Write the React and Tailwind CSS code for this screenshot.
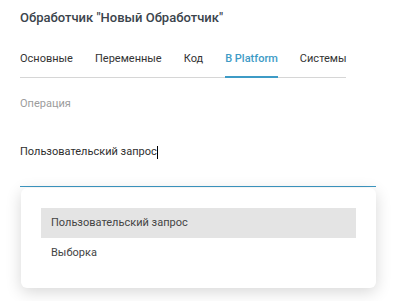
import React from "react";

export default function App() {
  const tabs = ["Основные", "Переменные", "Код", "B Platform", "Системы"];
  return (
    <div
      className="relative w-[398px] h-[301px] bg-white overflow-hidden"
      style={{ fontFamily: "Roboto, 'Noto Sans', sans-serif" }}
    >
      <div className="px-5 pt-[9px]">
        <div className="text-[13px] leading-[18px] font-medium text-[#3b444c] whitespace-nowrap">
          Обработчик "Новый Обработчик"
        </div>
        <div className="mt-[24px] w-[326px] flex gap-[22px] border-b border-[#d6d6d6]">
          {tabs.map((t) => (
            <div
              key={t}
              className={
                t === "B Platform"
                  ? "-mb-px pb-[9px] whitespace-nowrap text-[11px] leading-4 font-medium text-[#3d9bc6] border-b-2 border-[#3d9bc6]"
                  : "pb-[10px] whitespace-nowrap text-[11px] leading-4 text-[#333333]"
              }
            >
              {t}
            </div>
          ))}
        </div>
        <div className="mt-[19px] text-[11px] leading-[14px] text-[#9c9c9c]">
          Операция
        </div>
        <div className="mt-[33px] w-[356px] pb-[26px] border-b border-[#3d97c2]">
          <div className="flex items-center text-[11px] leading-4 text-[#2f2f2f]">
            <span>Пользовательский запрос</span>
            <span className="inline-block w-px h-[13px] bg-black" />
          </div>
        </div>
      </div>

      <div className="absolute left-[21px] top-[188px] w-[355px] rounded-[6px] bg-white shadow-[0_4px_16px_rgba(0,0,0,0.16)] px-5 py-5">
        <div className="h-[30px] flex items-center pl-[10px] bg-[#e4e4e4] text-[11px] leading-4 text-[#444444]">
          Пользовательский запрос
        </div>
        <div className="h-[30px] flex items-center pl-[10px] text-[11px] leading-4 text-[#444444]">
          Выборка
        </div>
      </div>
    </div>
  );
}
